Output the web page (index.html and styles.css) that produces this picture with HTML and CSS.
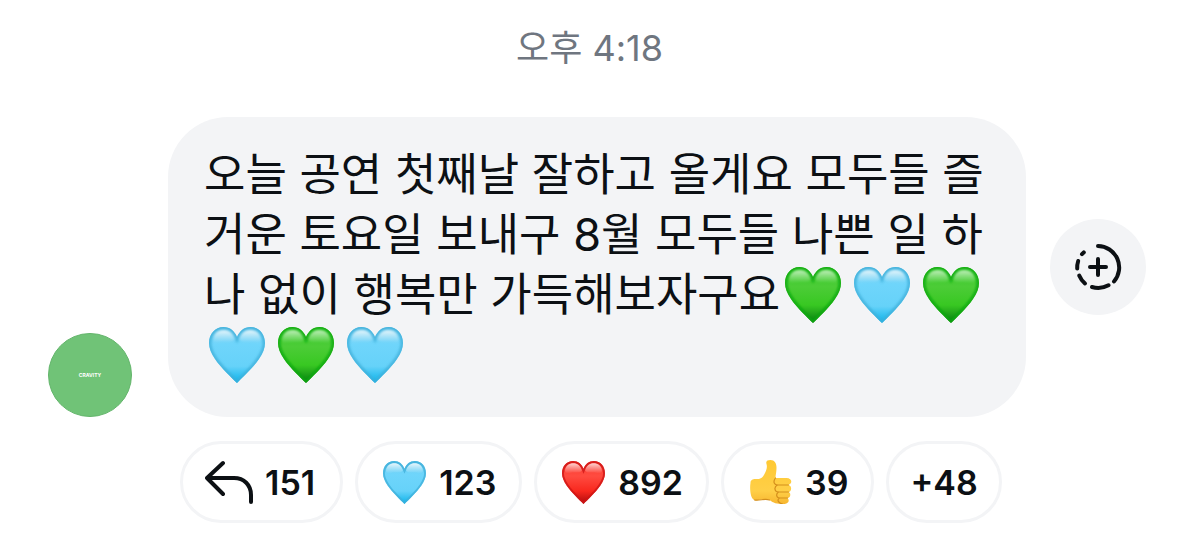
FILE: index.html
```html
<!DOCTYPE html>
<html lang="ko">
<head>
<meta charset="utf-8">
<meta name="viewport" content="width=device-width, initial-scale=1">
<title>메시지</title>
<link rel="stylesheet" href="styles.css">
</head>
<body>
<svg class="defs" aria-hidden="true">
  <defs>
    <linearGradient id="blue-fill" x1="0" y1="0" x2="0" y2="1">
      <stop offset="0" stop-color="#5cc3ea"/><stop offset=".3" stop-color="#6fd5fb"/><stop offset=".7" stop-color="#66d2f9"/><stop offset="1" stop-color="#08b2ea"/>
    </linearGradient>
    <linearGradient id="green-fill" x1="0" y1="0" x2="0" y2="1">
      <stop offset="0" stop-color="#35cb27"/><stop offset=".35" stop-color="#4ccc37"/><stop offset=".68" stop-color="#38c822"/><stop offset="1" stop-color="#087c12"/>
    </linearGradient>
    <linearGradient id="red-fill" x1="0" y1="0" x2="0" y2="1">
      <stop offset="0" stop-color="#fa382e"/><stop offset=".35" stop-color="#ff4b40"/><stop offset=".7" stop-color="#f8281e"/><stop offset="1" stop-color="#ac0a0d"/>
    </linearGradient>
    <linearGradient id="shine" x1="0" y1="0" x2="0" y2="1">
      <stop offset="0" stop-color="#fff" stop-opacity=".85"/><stop offset="1" stop-color="#fff" stop-opacity="0"/>
    </linearGradient>
    <linearGradient id="skin" x1="0" y1="0" x2="0" y2="1">
      <stop offset="0" stop-color="#ffc933"/><stop offset=".7" stop-color="#ffcf47"/><stop offset="1" stop-color="#f7b630"/>
    </linearGradient>
    <filter id="soft" x="-10%" y="-10%" width="120%" height="120%"><feGaussianBlur stdDeviation="1"/></filter>
    <path id="heart-shape" d="M28 56C23 51 12 41 6 32C2 26 0 21 0 16C0 7 6 0 14.500 0C21 0 25.500 4 28 10C30.500 4 35 0 41.500 0C50 0 56 7 56 16C56 21 54 26 50 32C44 41 33 51 28 56Z"/>
    <clipPath id="heart-clip"><use href="#heart-shape"/></clipPath>
    <g id="heart-edge" clip-path="url(#heart-clip)"><use href="#heart-shape" fill="none" stroke="currentColor" stroke-width="5" filter="url(#soft)"/></g>
    <g id="heart-shine" fill="url(#shine)" filter="url(#soft)">
      <path d="M4 12C5 6 9 3 15 3C20 3 24 6 26 12C24 16 19 15 14 15C9 15 4 19 4 12Z"/>
      <path d="M30 12C32 6 36 3 41 3C47 3 51 6 52 12C52 19 47 15 42 15C37 15 32 16 30 12Z"/>
    </g>
    <symbol id="heart-blue" viewBox="0 0 56 56"><use href="#heart-shape" fill="url(#blue-fill)"/><use class="edge-blue" href="#heart-edge"/><use href="#heart-shine"/></symbol>
    <symbol id="heart-green" viewBox="0 0 56 56"><use href="#heart-shape" fill="url(#green-fill)"/><use class="edge-green" href="#heart-edge"/><use href="#heart-shine" opacity=".8"/></symbol>
    <symbol id="heart-red" viewBox="0 0 56 56"><use href="#heart-shape" fill="url(#red-fill)"/><use class="edge-red" href="#heart-edge"/><use href="#heart-shine" opacity=".9"/></symbol>
  </defs>
</svg>

<main class="chat">
  <time class="stamp" datetime="16:18">오후 4:18</time>

  <article class="message">
    <div class="avatar"><span class="avatar-name">CRAVITY</span></div>
    <p class="bubble">오늘 공연 첫째날 잘하고 올게요 모두들 즐거운 토요일 보내구 8월 모두들 나쁜 일 하나 없이 행복만 가득해보자구요<svg class="emoji" role="img" aria-label="초록 하트"><use href="#heart-green"/></svg><svg class="emoji" role="img" aria-label="하늘색 하트"><use href="#heart-blue"/></svg><svg class="emoji" role="img" aria-label="초록 하트"><use href="#heart-green"/></svg><svg class="emoji" role="img" aria-label="하늘색 하트"><use href="#heart-blue"/></svg><svg class="emoji" role="img" aria-label="초록 하트"><use href="#heart-green"/></svg><svg class="emoji" role="img" aria-label="하늘색 하트"><use href="#heart-blue"/></svg></p>
    <button class="story" type="button" aria-label="스토리에 추가">
      <svg class="story-icon" viewBox="0 0 48 48" fill="none" stroke="currentColor" stroke-width="4" stroke-linecap="round">
        <path d="M24 3A21.500 21.500 0 0 1 40 38.500"/>
        <path d="M34.500 42.300A21.500 21.500 0 0 1 18 44"/>
        <path d="M11 40.500A21.500 21.500 0 0 1 5.200 32.500"/>
        <path d="M3.200 25.500A21.500 21.500 0 0 1 4.200 18"/>
        <path d="M8 11.200L9.800 9.400"/>
        <path d="M24 16V32M16 24H32"/>
      </svg>
    </button>
  </article>

  <div class="reactions">
    <button class="pill pill-reply" type="button" aria-label="답장 151">
      <svg class="reply-icon" viewBox="0 0 48 44" fill="none" stroke="currentColor" stroke-width="4" stroke-linecap="round" stroke-linejoin="round"><path d="M18 3L2 18L18 34M2 18H29C39 18 46 25 46 35V42"/></svg>
      <span>151</span>
    </button>
    <button class="pill" type="button" aria-label="하늘색 하트 123"><svg class="reaction"><use href="#heart-blue"/></svg><span>123</span></button>
    <button class="pill" type="button" aria-label="빨간 하트 892"><svg class="reaction"><use href="#heart-red"/></svg><span>892</span></button>
    <button class="pill" type="button" aria-label="좋아요 39">
      <svg class="reaction reaction-thumb" viewBox="0 0 42 44">
        <path fill="url(#skin)" d="M1 23C1 20 3 19 6 19C11 19 13 18 15 14C17 10 18 7 17 4C16 1 18 0 21 0C25 0 27 3 27 8C27 12 26 15 26 18H37C43 18 43 24 39 25C43 26 42 32 39 32C42 33 41 38 38 38C41 41 38 44 34 44C27 44 24 43 20 40C15 38 10 41 5 40C1 39 0 29 1 23Z"/>
        <path fill="none" stroke="#d48f1c" stroke-width="1.200" stroke-linecap="round" d="M26 18C23 22 25 25 28 25H39M28 25C24 27 25 32 29 32H39M29 32C26 34 27 38 30 38H38M30 38C27 40 29 43 33 44M5 40C11 41 15 38 20 40"/>
      </svg>
      <span>39</span>
    </button>
    <button class="pill pill-more" type="button" aria-label="반응 48개 더 보기"><span>+48</span></button>
  </div>
</main>
</body>
</html>
```

FILE: styles.css
```css
* {
  box-sizing: border-box;
}

body {
  margin: 0;
  background: #fff;
  color: #0c1014;
  font-family: Inter, "Noto Sans CJK KR", sans-serif;
}

button {
  font: inherit;
  color: inherit;
  padding: 0;
  cursor: pointer;
}

.defs {
  position: absolute;
  width: 0;
  height: 0;
}

.edge-blue {
  color: #3fafd9;
  opacity: .75;
}

.edge-green {
  color: #07a80d;
  opacity: .8;
}

.edge-red {
  color: #cf1514;
  opacity: .8;
}

.chat {
  display: flex;
  flex-direction: column;
  padding: 24px 33px 19px 48px;
}

.stamp {
  align-self: center;
  margin-right: 15px;
  margin-bottom: 45px;
  color: #6f7680;
  font-size: 36px;
  line-height: 48px;
}

.message {
  display: flex;
  align-items: center;
}

.avatar {
  display: grid;
  place-items: center;
  flex: none;
  align-self: flex-end;
  width: 84px;
  height: 84px;
  margin-right: 36px;
  border: 1px solid #63b56b;
  border-radius: 50%;
  background: #70c377;
}

.avatar-name {
  color: #fff;
  font-size: 5px;
  font-weight: 700;
  line-height: 6px;
}

.bubble {
  flex: 1;
  min-width: 0;
  margin: 0 24px 0 0;
  padding: 28px 36px 32px;
  border-radius: 60px;
  background: #f3f4f6;
  font-size: 45px;
  line-height: 60px;
}

.emoji {
  width: 56px;
  height: 56px;
  margin: 0 8px 0 5px;
  vertical-align: -12px;
}

.story {
  display: grid;
  place-items: center;
  flex: none;
  width: 96px;
  height: 96px;
  border: 0;
  border-radius: 50%;
  background: #f3f4f6;
}

.story-icon {
  width: 48px;
  height: 48px;
}

.reactions {
  display: flex;
  flex-wrap: wrap;
  gap: 12px;
  margin: 24px 0 0 132px;
}

.pill {
  display: flex;
  align-items: center;
  gap: 13px;
  height: 82px;
  padding: 0 23px 0 25px;
  border: 3px solid #f3f4f6;
  border-radius: 41px;
  background: #fff;
  font-size: 34px;
  font-weight: 600;
}

.pill-reply {
  gap: 12px;
  padding: 0 25px 0 22px;
}

.pill-more {
  padding: 0 21px;
}

.reply-icon {
  width: 48px;
  height: 44px;
}

.reaction {
  width: 43px;
  height: 43px;
}

.reaction-thumb {
  height: 44px;
}
```
